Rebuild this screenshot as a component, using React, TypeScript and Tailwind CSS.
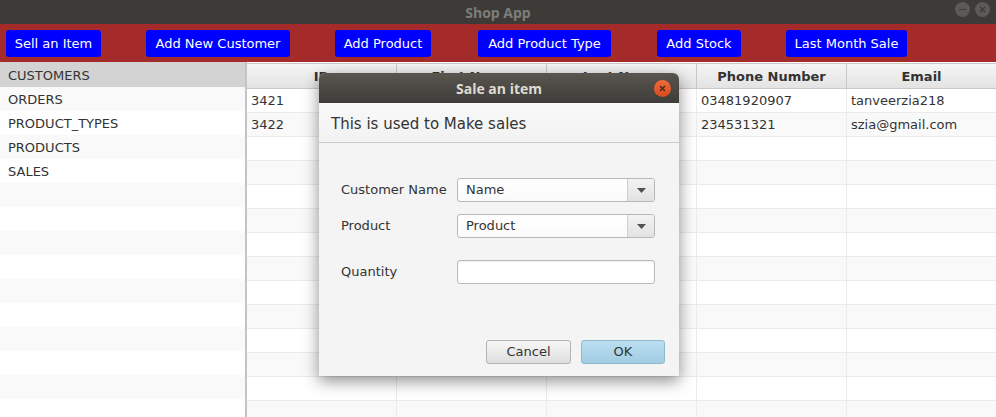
import { useState } from 'react'

const toolbarButtons = [
  { label: 'Sell an Item', cls: 'w-[95px] ml-[6px]' },
  { label: 'Add New Customer', cls: 'w-[144px] ml-[45px]' },
  { label: 'Add Product', cls: 'w-[96px] ml-[45px]' },
  { label: 'Add Product Type', cls: 'w-[133px] ml-[47px]' },
  { label: 'Add Stock', cls: 'w-[84px] ml-[46px]' },
  { label: 'Last Month Sale', cls: 'w-[121px] ml-[45px]' },
]

const tables = ['CUSTOMERS', 'ORDERS', 'PRODUCT_TYPES', 'PRODUCTS', 'SALES']

const columns = ['ID', 'First Name', 'Last Name', 'Phone Number', 'Email']

const customers = [
  ['3421', 'Tanveer', 'Zia', '03481920907', 'tanveerzia218'],
  ['3422', 'Sana', 'Zia', '234531321', 'szia@gmail.com'],
]

function ComboBox({ value }: { value: string }) {
  return (
    <div className="flex h-[24px] w-[198px] rounded-[3px] border border-[#b8b8b8] bg-gradient-to-b from-white to-[#fafafa] overflow-hidden">
      <div className="flex-1 flex items-center pl-[8px] text-[13px] text-[#333]">{value}</div>
      <div className="w-[27px] flex items-center justify-center border-l border-[#cfcfcf] bg-gradient-to-b from-[#f3f3f3] to-[#e2e2e2]">
        <svg width="9" height="5" viewBox="0 0 9 5">
          <path d="M0 0 L9 0 L4.5 5 Z" fill="#505050" />
        </svg>
      </div>
    </div>
  )
}

export default function App() {
  const [selected] = useState(0)

  return (
    <div
      className="relative w-[996px] h-[417px] overflow-hidden bg-white"
      style={{ fontFamily: '"DejaVu Sans", sans-serif' }}
    >
      {/* Window title bar */}
      <div className="relative h-[24px] bg-[#3c3b37] flex items-center justify-center">
        <span className="text-[14px] font-bold text-[#7f7d78]" style={{ fontFamily: '"Open Sans", sans-serif' }}>
          Shop App
        </span>
        <div className="absolute right-[6px] top-[2px] flex gap-[5px]">
          <div className="w-[15px] h-[15px] rounded-full bg-[#5b5a56] flex items-center justify-center">
            <div className="w-[7px] h-[1.5px] bg-[#3c3b37]" />
          </div>
          <div className="w-[15px] h-[15px] rounded-full bg-[#5b5a56] flex items-center justify-center">
            <svg width="7" height="7" viewBox="0 0 7 7">
              <path d="M1 1 L6 6 M6 1 L1 6" stroke="#3c3b37" strokeWidth="1.3" />
            </svg>
          </div>
        </div>
      </div>

      {/* Toolbar */}
      <div className="h-[38px] bg-[#a52a2a] flex items-start pt-[6px]">
        {toolbarButtons.map((b) => (
          <button
            key={b.label}
            className={`${b.cls} shrink-0 h-[27px] rounded-[3px] bg-[#0000ff] text-white text-[13px] flex items-center justify-center`}
          >
            {b.label}
          </button>
        ))}
      </div>

      {/* Main area */}
      <div className="flex h-[355px]">
        {/* Table list */}
        <div className="w-[247px] shrink-0 border-r-2 border-[#c4c4c4] flex flex-col pt-[1px] bg-[#d3d3d3]">
          {Array.from({ length: 15 }).map((_, i) => (
            <div
              key={i}
              className={`h-[24px] shrink-0 flex items-center pl-[8px] pt-[1px] text-[13px] text-[#333] ${
                i === selected ? 'bg-[#d3d3d3]' : i % 2 === 1 ? 'bg-[#f9f9f9]' : 'bg-white'
              }`}
            >
              {tables[i] ?? ''}
            </div>
          ))}
        </div>

        {/* Customers table */}
        <div className="flex-1 flex flex-col pt-[1px]">
          <div className="flex h-[26px] shrink-0 border-y border-[#c8c8c8]">
            {columns.map((c, i) => (
              <div
                key={c}
                className={`h-full flex items-center justify-center pt-[1px] text-[13px] font-bold text-[#333] bg-gradient-to-b from-[#f5f5f5] to-[#e3e3e3] ${
                  i < 4 ? 'w-[150px] border-r border-[#c8c8c8]' : 'flex-1'
                }`}
              >
                {c}
              </div>
            ))}
          </div>
          {Array.from({ length: 14 }).map((_, r) => (
            <div key={r} className={`flex h-[24px] shrink-0 border-b border-[#ebebeb] ${r % 2 === 1 ? 'bg-[#f9f9f9]' : 'bg-white'}`}>
              {columns.map((c, i) => (
                <div
                  key={c}
                  className={`h-full flex items-center pl-[4px] text-[13px] text-[#333] ${
                    i < 4 ? 'w-[150px] border-r border-[#ebebeb]' : 'flex-1'
                  }`}
                >
                  {customers[r]?.[i] ?? ''}
                </div>
              ))}
            </div>
          ))}
        </div>
      </div>

      {/* Sale dialog */}
      <div className="absolute left-[319px] top-[73px] w-[360px] h-[303px] flex flex-col rounded-t-[6px] bg-[#f4f4f4] shadow-[0_5px_16px_rgba(0,0,0,0.45)]">
        <div className="relative h-[30px] shrink-0 rounded-t-[6px] bg-gradient-to-b from-[#59554f] to-[#3f3d39] flex items-center justify-center">
          <span className="text-[14px] font-bold text-[#dfdbd2]" style={{ fontFamily: '"Open Sans", sans-serif' }}>
            Sale an item
          </span>
          <div className="absolute right-[8px] top-[7px] w-[17px] h-[17px] rounded-full bg-gradient-to-b from-[#f0683a] to-[#d94a1a] flex items-center justify-center">
            <svg width="7" height="7" viewBox="0 0 7 7">
              <path d="M1 1 L6 6 M6 1 L1 6" stroke="#3a2a20" strokeWidth="1.3" />
            </svg>
          </div>
        </div>

        <div className="h-[40px] shrink-0 flex items-center pl-[12px] pt-[3px] border-b border-[#c9c9c9] bg-gradient-to-b from-[#f9f9f9] to-[#f2f2f2] text-[15px] text-[#333]">
          This is used to Make sales
        </div>

        <div className="flex flex-col pl-[22px] pt-[35px]">
          <div className="flex items-center">
            <span className="w-[116px] text-[13px] text-[#333]">Customer Name</span>
            <ComboBox value="Name" />
          </div>
          <div className="flex items-center mt-[12px]">
            <span className="w-[116px] text-[13px] text-[#333]">Product</span>
            <ComboBox value="Product" />
          </div>
          <div className="flex items-center mt-[22px]">
            <span className="w-[116px] text-[13px] text-[#333]">Quantity</span>
            <div className="w-[198px] h-[24px] rounded-[3px] border border-[#b8b8b8] bg-white shadow-[inset_0_1px_1px_rgba(0,0,0,0.06)]" />
          </div>
        </div>

        <div className="mt-auto flex justify-end gap-[10px] pr-[14px] pb-[12px]">
          <button className="w-[85px] h-[24px] rounded-[3px] border border-[#b3b3b3] bg-gradient-to-b from-[#f7f7f7] to-[#dedede] text-[13px] text-[#333]">
            Cancel
          </button>
          <button className="w-[84px] h-[24px] rounded-[3px] border border-[#8fb8ce] bg-gradient-to-b from-[#bcdff1] to-[#a1cde4] text-[13px] text-[#333]">
            OK
          </button>
        </div>
      </div>
    </div>
  )
}
